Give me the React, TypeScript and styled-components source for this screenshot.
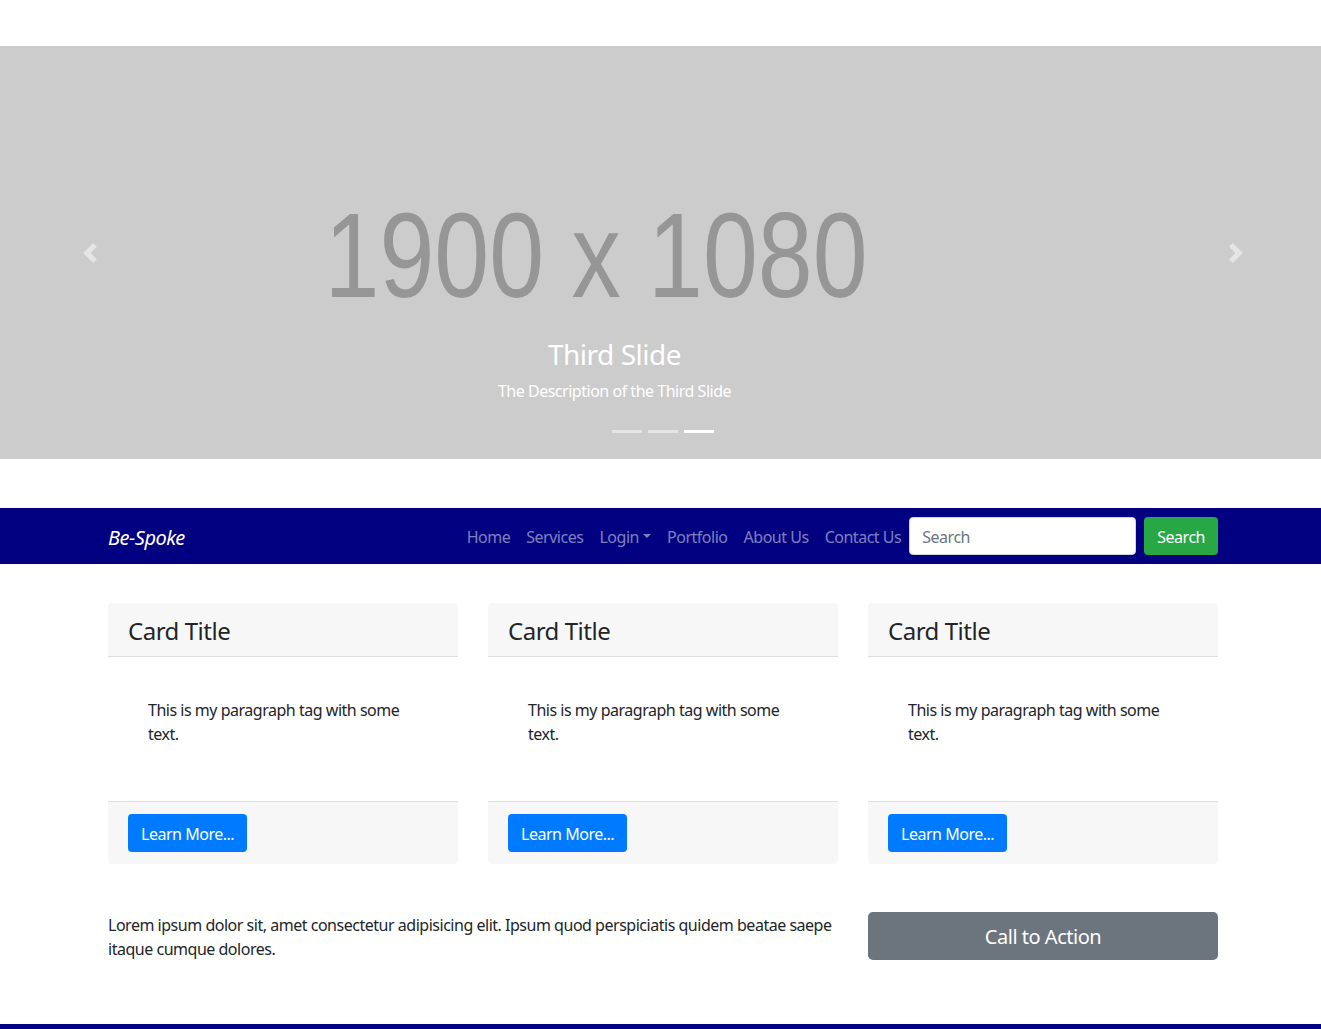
import styled, { createGlobalStyle } from 'styled-components';

const GlobalStyle = createGlobalStyle`
  * { box-sizing: border-box; }
  body {
    margin: 0;
    font-family: "Noto Sans", "Open Sans", sans-serif;
    font-size: 16px;
    line-height: 1.5;
    letter-spacing: -0.03em;
    color: #212529;
    background: #fff;
  }
`;

const Page = styled.div`
  display: flex;
  flex-direction: column;
`;

const Carousel = styled.div`
  position: relative;
  margin-top: 46px;
  height: 413px;
  background: #ccc;
  overflow: hidden;
`;

const Slide = styled.div`
  height: 100%;
  display: flex;
  align-items: center;
  justify-content: center;
  padding: 6px 128px 0 0;
`;

const Placeholder = styled.div`
  font-family: "Liberation Sans", Arial, sans-serif;
  font-size: 121px;
  line-height: 1;
  letter-spacing: 0;
  color: #969696;
  white-space: nowrap;
  transform: scaleX(0.815);
`;

const Caption = styled.div`
  position: absolute;
  left: calc(15% - 46px);
  right: calc(15% + 46px);
  bottom: 20px;
  padding: 20px 0;
  text-align: center;
  color: #fff;
`;

const CaptionTitle = styled.h3`
  margin: 0 0 7px;
  padding-top: 2px;
  font-size: 28px;
  font-weight: 400;
  line-height: 1.2;
`;

const CaptionText = styled.p`
  margin: 0 0 16px;
`;

const Control = styled.button<{ side: 'left' | 'right' }>`
  position: absolute;
  top: 0;
  bottom: 0;
  ${p => (p.side === 'left' ? 'left: 0; width: 180px;' : 'right: 0; width: 170px;')}
  display: flex;
  align-items: center;
  justify-content: center;
  background: none;
  border: 0;
  opacity: 0.5;
  cursor: pointer;
  padding: 0;
`;

const Indicators = styled.ol`
  position: absolute;
  left: 0;
  right: 0;
  bottom: 0;
  margin: 0 0 16px;
  padding: 0 0 0 5px;
  list-style: none;
  display: flex;
  justify-content: center;
`;

const Indicator = styled.li<{ active?: boolean }>`
  width: 30px;
  height: 3px;
  margin: 0 3px;
  box-sizing: content-box;
  border-top: 10px solid transparent;
  border-bottom: 10px solid transparent;
  background-clip: padding-box;
  background-color: #fff;
  opacity: ${p => (p.active ? 1 : 0.5)};
`;

const Navbar = styled.nav`
  margin-top: 49px;
  background: #000080;
  padding: 8px 0;
`;

const Container = styled.div`
  width: 1110px;
  margin-left: calc(50% - 552.5px);
`;

const NavInner = styled(Container)`
  display: flex;
  align-items: center;
`;

const Brand = styled.a`
  font-size: 20px;
  font-style: italic;
  color: #fff;
  padding: 7px 0 3px;
  line-height: 30px;
  text-decoration: none;
`;

const NavList = styled.ul`
  display: flex;
  margin: 0 0 0 auto;
  padding: 0;
  list-style: none;
`;

const NavLink = styled.a`
  display: flex;
  align-items: center;
  padding: 9px 8px 7px;
  color: rgba(255, 255, 255, 0.5);
  text-decoration: none;
`;

const Caret = styled.span`
  display: inline-block;
  margin-left: 4px;
  border-top: 4.8px solid;
  border-left: 4px solid transparent;
  border-right: 4px solid transparent;
  margin-bottom: 2px;
`;

const SearchForm = styled.form`
  display: flex;
  align-items: center;
  gap: 8px;
`;

const SearchInput = styled.input`
  width: 227px;
  height: 38px;
  padding: 7px 12px 5px;
  font: inherit;
  letter-spacing: inherit;
  color: #495057;
  border: 1px solid #ced4da;
  border-radius: 4px;
  background: #fff;
  &::placeholder { color: #6c757d; }
`;

const Button = styled.button<{ tone: 'primary' | 'success' | 'secondary'; large?: boolean }>`
  font: inherit;
  letter-spacing: inherit;
  font-size: ${p => (p.large ? '20px' : '16px')};
  line-height: 1.5;
  padding: ${p => (p.large ? '9px 16px 7px' : '7px 12px 5px')};
  border: 1px solid transparent;
  border-radius: ${p => (p.large ? '4.8px' : '4px')};
  color: #fff;
  cursor: pointer;
  background: ${p =>
    p.tone === 'primary' ? '#007bff' : p.tone === 'success' ? '#28a745' : '#6c757d'};
  width: ${p => (p.large ? '100%' : 'auto')};
`;

const CardRow = styled(Container)`
  margin-top: 39px;
  display: grid;
  grid-template-columns: repeat(3, 1fr);
  gap: 30px;
`;

const Card = styled.div`
  display: flex;
  flex-direction: column;
  border-radius: 4px;
  overflow: hidden;
`;

const CardHeader = styled.div`
  padding: 14px 20px 10px;
  background: #f7f7f7;
  border-bottom: 1px solid #dfdfdf;
`;

const CardTitle = styled.h3`
  margin: 0;
  font-size: 24px;
  font-weight: 400;
  line-height: 1.2;
`;

const CardBody = styled.div`
  padding: 20px;
`;

const CardText = styled.p`
  margin: 0 0 16px;
  padding: 21px 20px 19px;
`;

const CardFooter = styled.div`
  padding: 12px 20px;
  background: #f7f7f7;
  border-top: 1px solid #dfdfdf;
`;

const InfoRow = styled(Container)`
  margin-top: 48px;
  display: grid;
  grid-template-columns: 730px 1fr;
  gap: 30px;
  align-items: start;
`;

const InfoText = styled.p`
  margin: 0 0 16px;
  padding-top: 1px;
`;

const Footer = styled.footer`
  margin-top: 47px;
  height: 40px;
  background: #000080;
`;

function Chevron({ dir }: { dir: 'left' | 'right' }) {
  return (
    <svg width="20" height="20" viewBox="0 0 8 8" fill="#fff">
      {dir === 'left' ? (
        <path d="M5.25 0l-4 4 4 4 1.5-1.5L4.25 4l2.5-2.5L5.25 0z" />
      ) : (
        <path d="M2.75 0l-1.5 1.5L3.75 4l-2.5 2.5L2.75 8l4-4-4-4z" />
      )}
    </svg>
  );
}

const cards = [1, 2, 3];
const links = ['Home', 'Services', 'Login', 'Portfolio', 'About Us', 'Contact Us'];

export default function App() {
  return (
    <Page>
      <GlobalStyle />
      <Carousel>
        <Slide>
          <Placeholder>1900 x 1080</Placeholder>
        </Slide>
        <Control side="left" aria-label="Previous">
          <Chevron dir="left" />
        </Control>
        <Control side="right" aria-label="Next">
          <Chevron dir="right" />
        </Control>
        <Caption>
          <CaptionTitle>Third Slide</CaptionTitle>
          <CaptionText>The Description of the Third Slide</CaptionText>
        </Caption>
        <Indicators>
          <Indicator />
          <Indicator />
          <Indicator active />
        </Indicators>
      </Carousel>

      <Navbar>
        <NavInner>
          <Brand href="#">Be-Spoke</Brand>
          <NavList>
            {links.map(l => (
              <li key={l}>
                <NavLink href="#">
                  {l}
                  {l === 'Login' && <Caret />}
                </NavLink>
              </li>
            ))}
          </NavList>
          <SearchForm onSubmit={e => e.preventDefault()}>
            <SearchInput type="search" placeholder="Search" />
            <Button tone="success" type="submit">Search</Button>
          </SearchForm>
        </NavInner>
      </Navbar>

      <CardRow>
        {cards.map(c => (
          <Card key={c}>
            <CardHeader>
              <CardTitle>Card Title</CardTitle>
            </CardHeader>
            <CardBody>
              <CardText>This is my paragraph tag with some text.</CardText>
            </CardBody>
            <CardFooter>
              <Button tone="primary">Learn More...</Button>
            </CardFooter>
          </Card>
        ))}
      </CardRow>

      <InfoRow>
        <InfoText>
          Lorem ipsum dolor sit, amet consectetur adipisicing elit. Ipsum quod perspiciatis quidem
          beatae saepe itaque cumque dolores.
        </InfoText>
        <Button tone="secondary" large>Call to Action</Button>
      </InfoRow>

      <Footer />
    </Page>
  );
}
